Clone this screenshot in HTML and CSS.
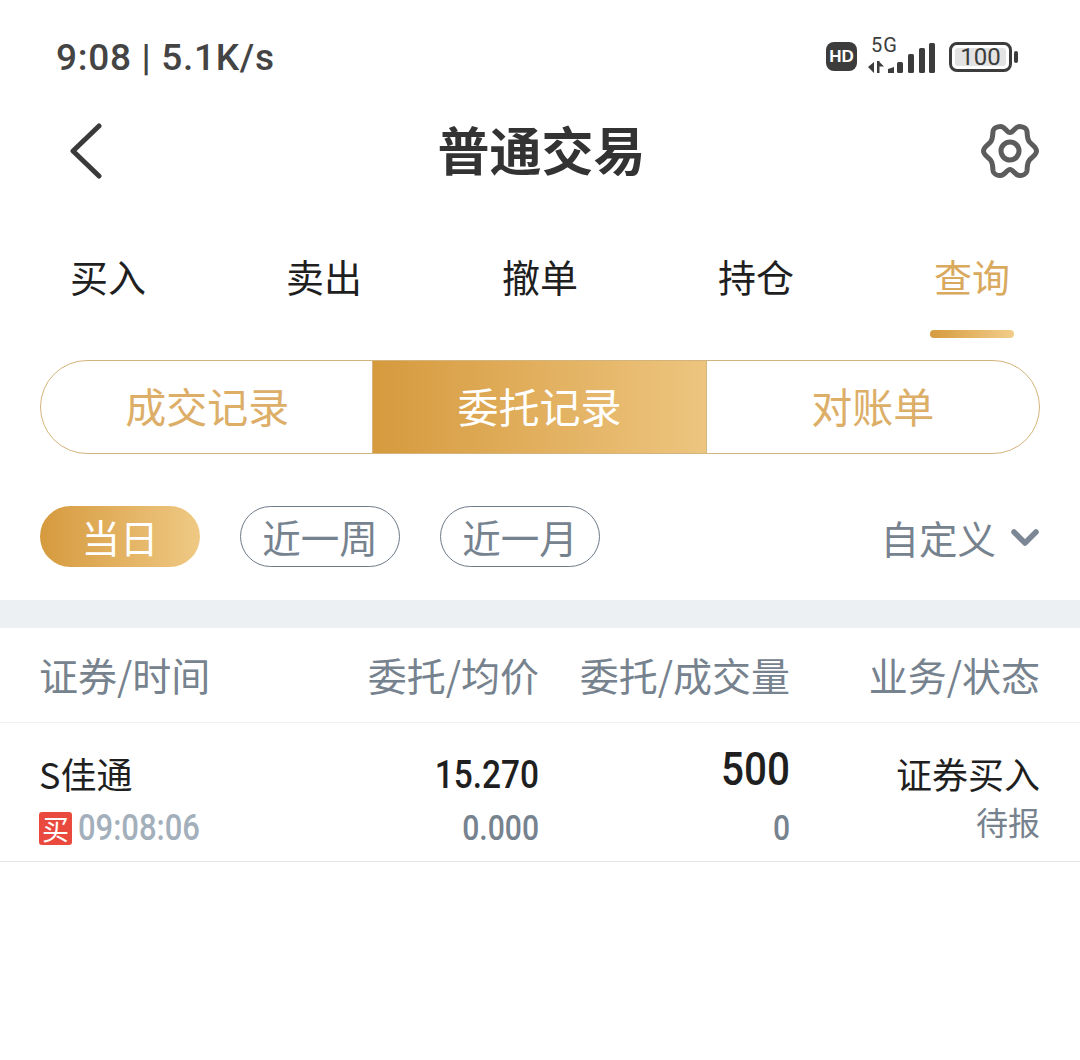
FILE: index.html
```html
<!DOCTYPE html>
<html lang="zh-CN">
  <head>
    <meta charset="UTF-8" />
    <title>普通交易</title>
    <link rel="stylesheet" href="styles.css">
  </head>
  <body>
    <div class="status-bar">
      <div class="status-text">9:08 | 5.1K/s</div>
      <div class="status-icons">
        <div class="hd-badge">HD</div>
        <div class="signal">
          <span class="signal-label">5G</span>
          <svg class="signal-bars" width="67" height="32" viewBox="0 0 67 32">
            <path d="M0 25l6-5v11zM9 19h2.500v12H9zM11.500 20l4.500 4.500h-4.500z" fill="#3c3c3c"/>
            <path d="M20 27l6-2v6h-6z" fill="#3c3c3c"/>
            <rect x="29" y="20" width="6" height="11" rx="1.500" fill="#3c3c3c"/>
            <rect x="40" y="12" width="6" height="19" rx="1.500" fill="#3c3c3c"/>
            <rect x="51" y="6" width="6" height="25" rx="1.500" fill="#3c3c3c"/>
            <rect x="61" y="1" width="6" height="30" rx="1.500" fill="#3c3c3c"/>
          </svg>
        </div>
        <div class="battery">
          <div class="battery-body"><span class="battery-level">100</span></div>
          <div class="battery-tip"></div>
        </div>
      </div>
    </div>

    <div class="nav-bar">
      <svg class="back-icon" width="32" height="56" viewBox="0 0 32 56">
        <path d="M29 3L3 28l26 25" fill="none" stroke="#3a3a3a" stroke-width="5" stroke-linecap="round" stroke-linejoin="round"/>
      </svg>
      <h1>普通交易</h1>
      <svg class="gear-icon" width="58" height="56" viewBox="0 0 58 56">
        <path d="M29 9.500C32.500 9.500 34 3.500 38.500 3.500C41.500 3.500 45.500 5 46 8.500C46.500 13 46 16 48.500 19C50.500 21.500 55.500 24 55.500 28C55.500 32 50.500 34.500 48.500 37C46 40 46.500 43 46 47.500C45.500 51 41.500 52.500 38.500 52.500C34 52.500 32.500 46.500 29 46.500C25.500 46.500 24 52.500 19.500 52.500C16.500 52.500 12.500 51 12 47.500C11.500 43 12 40 9.500 37C7.500 34.500 2.500 32 2.500 28C2.500 24 7.500 21.500 9.500 19C12 16 11.500 13 12 8.500C12.500 5 16.500 3.500 19.500 3.500C24 3.500 25.500 9.500 29 9.500z" fill="none" stroke="#5c5c5c" stroke-width="5"/>
        <circle cx="29" cy="28" r="9" fill="none" stroke="#5c5c5c" stroke-width="5"/>
      </svg>
    </div>

    <div class="tabs">
      <div class="tab">买入</div>
      <div class="tab">卖出</div>
      <div class="tab">撤单</div>
      <div class="tab">持仓</div>
      <div class="tab active">查询</div>
    </div>

    <div class="segments">
      <div class="segment">成交记录</div>
      <div class="segment active">委托记录</div>
      <div class="segment">对账单</div>
    </div>

    <div class="filters">
      <div class="chip active">当日</div>
      <div class="chip">近一周</div>
      <div class="chip">近一月</div>
      <div class="custom">
        自定义
        <svg width="30" height="20" viewBox="0 0 30 20">
          <path d="M4 5l11 11L26 5" fill="none" stroke="#7b8794" stroke-width="5.500" stroke-linecap="round" stroke-linejoin="round"/>
        </svg>
      </div>
    </div>

    <div class="band"></div>

    <div class="table-row table-head">
      <div class="col-name">证券/时间</div>
      <div class="col-price">委托/均价</div>
      <div class="col-qty">委托/成交量</div>
      <div class="col-status">业务/状态</div>
    </div>

    <div class="table-row record">
      <div class="col-name">
        <div class="stock">S佳通</div>
        <div class="time-line"><span class="buy-tag">买</span><span class="num time">09:08:06</span></div>
      </div>
      <div class="col-price">
        <div class="num main price">15.270</div>
        <div class="num sub">0.000</div>
      </div>
      <div class="col-qty">
        <div class="num main qty">500</div>
        <div class="num sub">0</div>
      </div>
      <div class="col-status">
        <div class="biz">证券买入</div>
        <div class="state">待报</div>
      </div>
    </div>
  </body>
</html>
```

FILE: styles.css
```css
* {
  box-sizing: border-box;
}

body {
  margin: 0;
  background: #fff;
  color: #1f1f1f;
  font-family: "Noto Sans CJK SC", "Noto Sans", sans-serif;
}

.status-bar {
  height: 113px;
  padding: 36px 40px 0 56px;
  display: flex;
  justify-content: space-between;
  align-items: flex-start;
}

.status-text {
  font-family: Roboto, sans-serif;
  font-size: 37px;
  font-weight: 500;
  line-height: 44px;
  letter-spacing: 0.7px;
  color: #444;
}

.status-icons {
  display: flex;
  align-items: flex-start;
  margin-right: 22px;
}

.hd-badge {
  width: 31px;
  height: 29px;
  margin-top: 6px;
  border-radius: 8px;
  background: #3c3c3c;
  color: #fff;
  font-family: "Liberation Sans", sans-serif;
  font-size: 17px;
  font-weight: bold;
  line-height: 29px;
  text-align: center;
}

.signal {
  width: 67px;
  height: 40px;
  margin-left: 11px;
  position: relative;
}

.signal-label {
  position: absolute;
  left: 3px;
  top: -1px;
  font-family: Roboto, sans-serif;
  font-size: 20px;
  letter-spacing: 1px;
  line-height: 20px;
  color: #3c3c3c;
}

.signal-bars {
  position: absolute;
  left: 0;
  top: 6px;
}

.battery {
  display: flex;
  align-items: center;
  margin-left: 14px;
  margin-top: 6px;
}

.battery-body {
  width: 63px;
  height: 30px;
  border: 3px solid #3c3c3c;
  border-radius: 8px;
  padding: 3px;
}

.battery-level {
  display: block;
  height: 18px;
  border-radius: 3px;
  background: #e3e3e3;
  font-family: Roboto, sans-serif;
  font-size: 24px;
  line-height: 18px;
  text-align: center;
  color: #3c3c3c;
}

.battery-tip {
  width: 4px;
  height: 12px;
  margin-left: 2px;
  border-radius: 2px;
  background: #3c3c3c;
}

.nav-bar {
  height: 75px;
  padding: 0 41px 0 70px;
  display: flex;
  align-items: center;
  justify-content: space-between;
}

h1 {
  margin: -4px 0 0;
  font-size: 52px;
  font-weight: bold;
  line-height: 75px;
  color: #333;
}

.tabs {
  display: flex;
  margin-top: 48px;
  height: 124px;
}

.tab {
  width: 216px;
  font-size: 38px;
  line-height: 80px;
  text-align: center;
  position: relative;
}

.tab.active {
  color: #d9a95e;
}

.tab.active::after {
  content: "";
  position: absolute;
  left: 66px;
  bottom: 22px;
  width: 84px;
  height: 8px;
  border-radius: 4px;
  background: linear-gradient(90deg, #d69b3f, #f2cd8a);
}

.segments {
  display: flex;
  height: 94px;
  margin: 0 40px;
  border: 1px solid #d4b47d;
  border-radius: 47px;
  overflow: hidden;
}

.segment {
  flex: 1;
  font-size: 41px;
  line-height: 88px;
  text-align: center;
  color: #dcae68;
}

.segment.active {
  margin-left: -1px;
  background: linear-gradient(90deg, #d69a3e, #edc57f);
  color: #fff;
  border-left: 1px solid #d4b47d;
  border-right: 1px solid #d4b47d;
}

.filters {
  display: flex;
  align-items: center;
  gap: 40px;
  height: 61px;
  margin: 52px 40px 33px;
}

.chip {
  width: 160px;
  height: 61px;
  border: 1px solid #6f7b87;
  border-radius: 31px;
  font-size: 38.500px;
  line-height: 59px;
  text-align: center;
  color: #76828e;
}

.chip.active {
  border: none;
  background: linear-gradient(90deg, #d69a3e, #efc984);
  color: #fff;
  line-height: 61px;
}

.custom {
  margin-left: auto;
  display: flex;
  align-items: center;
  gap: 14px;
  font-size: 38.500px;
  color: #76828e;
}

.band {
  height: 28px;
  background: #edf0f3;
}

.table-row {
  display: flex;
  padding: 0 40px;
  border-bottom: 1px solid #e6e6e6;
}

.table-head {
  height: 95px;
  padding-bottom: 2px;
  align-items: center;
  border-bottom-color: #f0f0f0;
  font-size: 39px;
  color: #76828e;
}

.table-head .col-name {
  margin-left: -1px;
  width: 291px;
}

.record {
  height: 139px;
}

.col-name {
  width: 290px;
}

.col-price {
  width: 209px;
  text-align: right;
}

.col-qty {
  width: 251px;
  text-align: right;
}

.col-status {
  width: 250px;
  text-align: right;
}

.num {
  font-family: Roboto, sans-serif;
  font-weight: 500;
  display: block;
  transform: scaleX(0.88);
  transform-origin: right center;
}

.stock {
  font-size: 36px;
  line-height: 50px;
  margin-top: 25px;
  margin-left: -1px;
}

.time-line {
  display: flex;
  align-items: center;
  margin-top: 8px;
}

.buy-tag {
  width: 33px;
  height: 33px;
  margin-left: -1px;
  border-radius: 3px;
  background: #ea4a3e;
  color: #fff;
  font-size: 27px;
  line-height: 33px;
  text-align: center;
}

.time {
  font-size: 36px;
  line-height: 44px;
  margin-left: 6px;
  color: #a3afbb;
  transform: scaleX(0.86);
  transform-origin: left center;
}

.main {
  color: #1f1f1f;
}

.price {
  font-size: 38px;
  line-height: 50px;
  margin-top: 27px;
}

.qty {
  font-size: 46px;
  line-height: 50px;
  margin-top: 21px;
}

.sub {
  font-size: 35px;
  line-height: 44px;
  margin-top: 7px;
  color: #76828e;
  transform: scaleX(0.86);
}

.qty + .sub {
  margin-top: 13px;
}

.biz {
  font-size: 36px;
  line-height: 50px;
  margin-top: 25px;
}

.state {
  margin-top: 1px;
  font-size: 32px;
  line-height: 44px;
  color: #76828e;
}
```
